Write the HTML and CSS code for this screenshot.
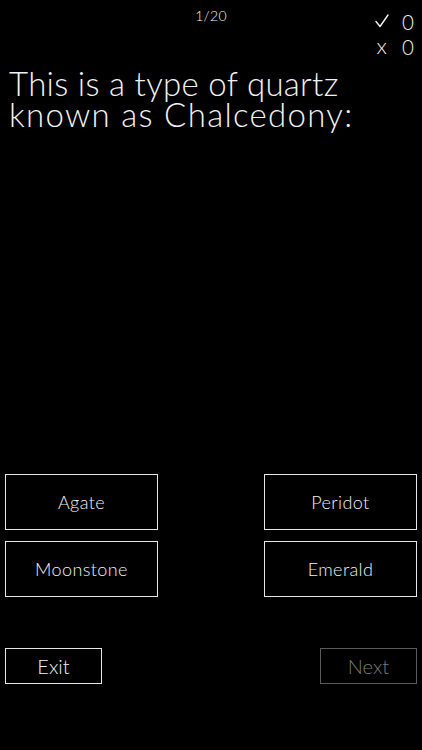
FILE: index.html
```html
<!DOCTYPE html>
<html lang="en">
<head>
<meta charset="utf-8">
<title>Quiz</title>
<link rel="stylesheet" href="styles.css">
</head>
<body>
<div class="screen">
  <header class="top">
    <div></div>
    <div class="counter">1/20</div>
    <div class="score">
      <div class="score-row">
        <svg class="check" width="14" height="14" viewBox="0 0 14 14" aria-label="correct"><polyline points="1,7.5 5,12.5 13,1" fill="none" stroke="#f2f2f2" stroke-width="1.4" stroke-linecap="round" stroke-linejoin="round"/></svg>
        <span class="num">0</span>
      </div>
      <div class="score-row">
        <span class="mark">x</span>
        <span class="num">0</span>
      </div>
    </div>
  </header>
  <h1 class="question"><span class="qline">This is a type of quartz</span><span class="qline wide">known as Chalcedony:</span></h1>
  <div class="spacer"></div>
  <div class="answers">
    <button class="answer">Agate</button>
    <button class="answer">Peridot</button>
    <button class="answer">Moonstone</button>
    <button class="answer">Emerald</button>
  </div>
  <nav class="nav">
    <button class="navbtn">Exit</button>
    <button class="navbtn disabled">Next</button>
  </nav>
</div>
</body>
</html>
```

FILE: styles.css
```css
html, body {
  margin: 0;
  padding: 0;
  background: #000;
}
body {
  font-family: Lato, "Open Sans", "DejaVu Sans", sans-serif;
  font-weight: 300;
  color: #f2f2f2;
}
.screen {
  width: 422px;
  height: 750px;
  display: flex;
  flex-direction: column;
  box-sizing: border-box;
}
.top {
  display: grid;
  grid-template-columns: 1fr auto 1fr;
  height: 62px;
}
.counter {
  font-size: 14px;
  line-height: 14px;
  padding-top: 9px;
  letter-spacing: 0.3px;
}
.score {
  justify-self: end;
  padding-right: 8px;
  padding-top: 8px;
  display: flex;
  flex-direction: column;
}
.score-row {
  display: flex;
  align-items: center;
  height: 25px;
}
.check {
  width: 14px;
  height: 14px;
  margin-left: 1px;
  margin-right: 13px;
}
.mark {
  width: 15px;
  margin-right: 13px;
  font-size: 22px;
  line-height: 24px;
  text-align: center;
}
.num {
  font-size: 20.5px;
  line-height: 24px;
  display: inline-block;
  transform: scaleY(1.08);
}
.question {
  margin: 6px 0 0 9px;
  font-size: 33px;
  line-height: 31px;
  font-weight: 300;
  letter-spacing: 0.3px;
}
.qline {
  display: block;
}
.qline.wide {
  letter-spacing: 1.3px;
}
.spacer {
  flex: 1;
}
.answers {
  display: grid;
  grid-template-columns: 153px 153px;
  justify-content: space-between;
  row-gap: 11px;
  padding: 0 5px;
  margin-bottom: 51px;
}
.answer, .navbtn {
  background: #000;
  color: #f2f2f2;
  border: 1px solid #e6e6e6;
  font-family: inherit;
  font-weight: 300;
  margin: 0;
  padding: 0;
}
.answer {
  height: 56px;
  font-size: 18px;
  letter-spacing: 0.4px;
}
.nav {
  display: flex;
  justify-content: space-between;
  padding: 0 5px;
  margin-bottom: 66px;
}
.navbtn {
  width: 97px;
  height: 36px;
  font-size: 20px;
}
.navbtn.disabled {
  border-color: #5a5a5a;
  color: #7a7a7a;
}
```
